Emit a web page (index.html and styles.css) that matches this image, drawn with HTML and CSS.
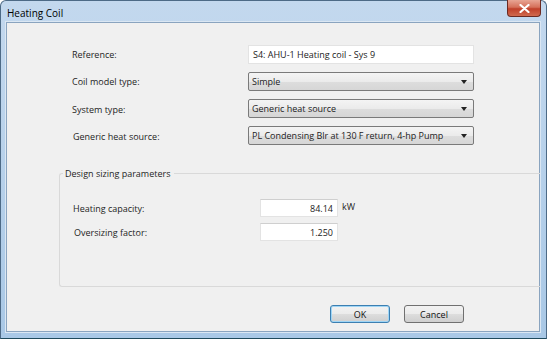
FILE: index.html
```html
<!DOCTYPE html>
<html lang="en">
<head>
    <meta charset="UTF-8">
    <title>Heating Coil</title>
    <link rel="stylesheet" href="styles.css">
</head>
<body>
    <div class="window">
        <div class="titlebar">
            <span class="title">Heating Coil</span>
            <button class="close" title="Close">
                <svg width="11" height="9" viewBox="0 0 11 9"><path d="M1.5 1 L9.5 8 M9.5 1 L1.5 8" stroke="#ffffff" stroke-width="2.2" stroke-linecap="round"/></svg>
            </button>
        </div>
        <div class="client">
            <div class="form">
                <label>Reference:</label>
                <input type="text" class="field" value="S4: AHU-1 Heating coil - Sys 9">

                <label>Coil model type:</label>
                <div class="combo"><span>Simple</span><i class="arrow"></i></div>

                <label>System type:</label>
                <div class="combo"><span>Generic heat source</span><i class="arrow"></i></div>

                <label class="nudge">Generic heat source:</label>
                <div class="combo"><span>PL Condensing Blr at 130 F return, 4-hp Pump</span><i class="arrow"></i></div>
            </div>

            <fieldset class="group">
                <legend>Design sizing parameters</legend>
                <div class="params">
                    <label>Heating capacity:</label>
                    <div class="num-row"><input type="text" class="num" value="84.14"><span class="unit">kW</span></div>

                    <label class="nudge">Oversizing factor:</label>
                    <div class="num-row"><input type="text" class="num" value="1.250"></div>
                </div>
            </fieldset>

            <div class="buttons">
                <button class="btn default">OK</button>
                <button class="btn">Cancel</button>
            </div>
        </div>
    </div>
</body>
</html>
```

FILE: styles.css
```css
body {
    margin: 0;
    font-family: "Open Sans", "DejaVu Sans", sans-serif;
    font-size: 9px;
    color: #1e1e1e;
    background: #ffffff;
}
.window {
    width: 547px;
    height: 339px;
    box-sizing: border-box;
    border: 1px solid #4d6a86;
    border-bottom-color: #1f4a5c;
    border-radius: 6px 6px 0 0;
    background: linear-gradient(to bottom, #c3d8ee 0%, #bcd4ec 30%, #a9c8e6 100%);
    display: flex;
    flex-direction: column;
}
.titlebar {
    height: 21px;
    display: flex;
    justify-content: space-between;
    align-items: flex-start;
    padding-left: 6px;
}
.title {
    font-size: 10px;
    color: #000;
    margin-top: 5px;
}
.close {
    width: 34px;
    height: 17px;
    margin-top: -1px;
    margin-right: 5px;
    border: 1px solid #6b2a22;
    border-top: none;
    border-radius: 0 0 4px 4px;
    background: linear-gradient(to bottom, #e8a594 0%, #d5705a 45%, #c0402a 55%, #d06a4f 100%);
    padding: 0;
    display: flex;
    align-items: center;
    justify-content: center;
}
.client {
    margin: 0 6px 6px 5px;
    flex: 1;
    background: #f0f0f0;
    border: 1px solid #8aa4bf;
    box-shadow: 0 0 0 1px #dbe7f3;
    display: flex;
    flex-direction: column;
}
.form {
    display: grid;
    grid-template-columns: 176px 226px;
    row-gap: 8px;
    padding: 22px 0 0 65px;
    align-items: center;
}
.nudge {
    padding-left: 1px;
}
.field {
    height: 19px;
    box-sizing: border-box;
    border: 1px solid #e3e3e3;
    background: #fff;
    font: inherit;
    padding: 0 4px;
    color: #222;
}
.combo {
    height: 19px;
    box-sizing: border-box;
    border: 1px solid #7a7a7a;
    border-radius: 2px;
    background: linear-gradient(to bottom, #f4f4f4 0%, #ebebeb 50%, #dddddd 51%, #d6d6d6 100%);
    display: flex;
    align-items: center;
    justify-content: space-between;
    padding: 0 6px 0 3px;
    color: #222;
    white-space: nowrap;
}
.combo + label {
    margin-top: 1px;
}
.arrow {
    width: 0;
    height: 0;
    border-left: 3px solid transparent;
    border-right: 3px solid transparent;
    border-top: 4px solid #222;
}
.group {
    margin: 22px -1px 0 52px;
    padding: 0;
    border: 1px solid #d9d9d9;
    border-right: none;
    border-radius: 3px 0 0 3px;
    height: 120px;
    box-sizing: border-box;
}
.group legend {
    margin-left: 3px;
    padding: 0 3px 0 2px;
}
.params {
    display: grid;
    grid-template-columns: 187px auto;
    row-gap: 6px;
    padding: 19px 0 0 13px;
    align-items: center;
}
.num-row {
    display: flex;
    align-items: center;
    gap: 4px;
}
.num {
    width: 78px;
    height: 18px;
    box-sizing: border-box;
    border: 1px solid #e3e3e3;
    border-top-color: #cfcfcf;
    background: #fff;
    font: inherit;
    text-align: right;
    padding: 0 4px;
    color: #222;
}
.unit {
    margin-top: -3px;
}
.buttons {
    display: flex;
    gap: 14px;
    padding: 18px 0 0 323px;
}
.btn {
    width: 60px;
    height: 18px;
    border: 1px solid #707070;
    border-radius: 3px;
    background: linear-gradient(to bottom, #f2f2f2 0%, #ebebeb 50%, #dddddd 51%, #cfcfcf 100%);
    font: inherit;
    color: #111;
    padding: 0;
}
.btn.default {
    border-color: #3c7fb1;
    box-shadow: inset 0 0 0 1px #9fd5f5;
}
```
